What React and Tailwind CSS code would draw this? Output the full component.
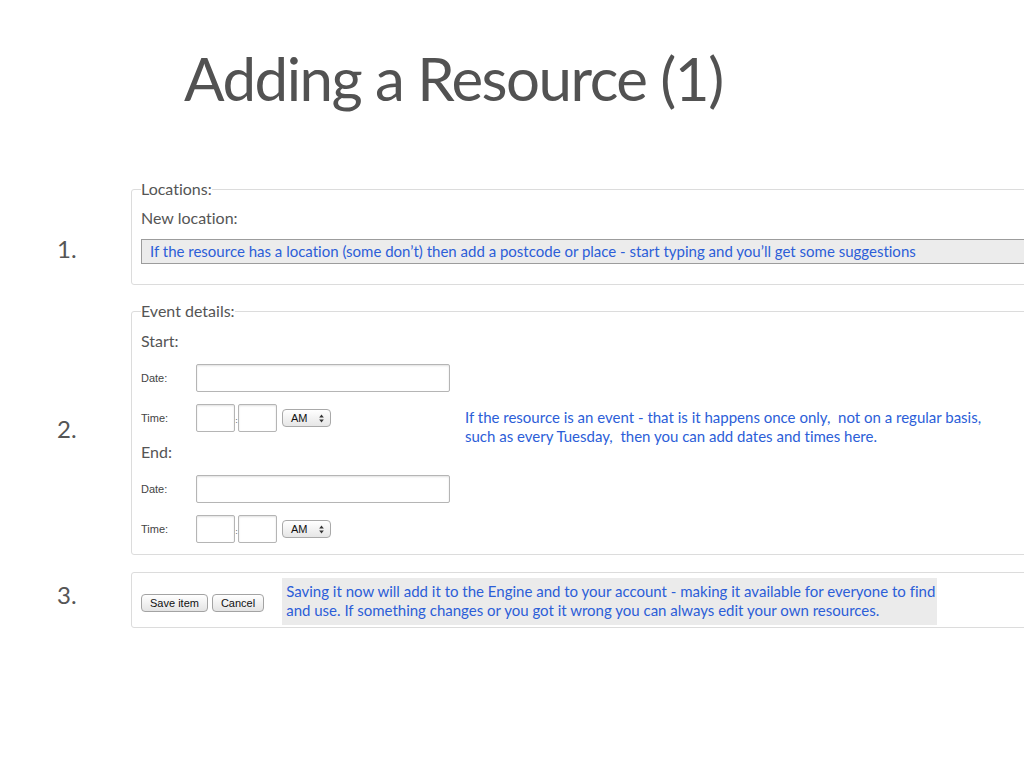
import React from 'react';

const BLUE = 'text-[#2c5ed8]';

const TextBox = ({ className = '' }) => (
  <div className={`h-[28px] border border-[#b5b5b5] rounded-[2px] bg-white shadow-[inset_0_1px_2px_rgba(0,0,0,0.12)] ${className}`}></div>
);

const AmSelect = () => (
  <div className="ml-[5px] w-[49px] h-[18px] rounded-[4px] border border-[#a9a9a9] bg-gradient-to-b from-white to-[#e6e6e6] flex items-center justify-between pl-[8px] pr-[6px] font-['Liberation_Sans',sans-serif] text-[11px] text-[#111]">
    <span>AM</span>
    <svg width="5" height="9" viewBox="0 0 5 9">
      <path d="M2.5 0.5 L4.8 3.5 L0.2 3.5 Z" fill="#333" />
      <path d="M2.5 8.5 L4.8 5.5 L0.2 5.5 Z" fill="#333" />
    </svg>
  </div>
);

const FieldRow = ({ label, children, className = '' }) => (
  <div className={`flex items-center ${className}`}>
    <span className="w-[55px] text-[11px] text-[#444] font-['Liberation_Sans',sans-serif]">{label}</span>
    {children}
  </div>
);

const TimeRow = ({ className }) => (
  <FieldRow label="Time:" className={className}>
    <div className="flex items-center">
      <TextBox className="w-[39px]" />
      <span className="text-[8px] leading-none text-[#555] -mx-[1px] mt-[4px] w-[5px] text-center">:</span>
      <TextBox className="w-[39px]" />
      <AmSelect />
    </div>
  </FieldRow>
);

const Button = ({ children, className = '' }) => (
  <button className={`h-[18px] px-[8px] rounded-[4px] border border-[#a3a3a3] bg-gradient-to-b from-white to-[#e4e4e4] text-[11px] leading-none text-[#111] font-['Liberation_Sans',sans-serif] ${className}`}>
    {children}
  </button>
);

export default function App() {
  return (
    <div className="w-[1024px] h-[768px] overflow-hidden bg-white font-['Lato',sans-serif] text-[#555] [font-variant-ligatures:none]">
      {/* Title */}
      <h1 className="pl-[184px] pt-[48px] text-[60px] leading-none text-[#525252] tracking-[-1.5px]">
        Adding a Resource (1)
      </h1>

      <div className="mt-[72px] flex flex-col gap-[17px]">
        {/* 1. Locations */}
        <div className="flex items-center">
          <div className="w-[131px] shrink-0 pl-[57px] text-[24px] mt-[32px]">1.</div>
          <fieldset className="w-[1000px] shrink-0 border border-[#dcdcdc] rounded-[3px] pl-[9px] pb-[20px]">
            <legend className="text-[16px] leading-[18px]">Locations:</legend>
            <div className="mt-[11px] text-[16px] leading-[18px]">New location:</div>
            <div className={`mt-[12px] h-[25px] border border-[#9c9c9c] bg-[#ececec] pl-[8px] flex items-center text-[15px] ${BLUE}`}>
              If the resource has a location (some don’t) then add a postcode or place - start typing and you’ll get some suggestions
            </div>
          </fieldset>
        </div>

        {/* 2. Event details */}
        <div className="flex items-center">
          <div className="w-[131px] shrink-0 pl-[57px] text-[24px]">2.</div>
          <fieldset className="w-[1000px] shrink-0 border border-[#dcdcdc] rounded-[3px] pl-[9px] pb-[11px]">
            <legend className="text-[16px] leading-[18px]">Event details:</legend>
            <div className="flex">
              <div className="w-[324px]">
                <div className="mt-[12px] text-[16px] leading-[18px]">Start:</div>
                <FieldRow label="Date:" className="mt-[14px]">
                  <TextBox className="w-[254px]" />
                </FieldRow>
                <TimeRow className="mt-[12px]" />
                <div className="mt-[11px] text-[16px] leading-[18px]">End:</div>
                <FieldRow label="Date:" className="mt-[14px]">
                  <TextBox className="w-[254px]" />
                </FieldRow>
                <TimeRow className="mt-[12px]" />
              </div>
              <div className={`mt-[88px] text-[15px] leading-[19px] ${BLUE}`}>
                If the resource is an event - that is it happens once only,&nbsp; not on a regular basis,
                <br />
                such as every Tuesday,&nbsp; then you can add dates and times here.
              </div>
            </div>
          </fieldset>
        </div>

        {/* 3. Save */}
        <div className="flex items-center">
          <div className="w-[131px] shrink-0 pl-[57px] text-[24px] mb-[10px]">3.</div>
          <fieldset className="w-[1000px] shrink-0 border border-[#dcdcdc] rounded-[3px] pl-[9px] pt-[5px] pb-[2px]">
            <div className="flex items-center">
              <Button className="mt-[3px]">Save item</Button>
              <Button className="ml-[4px] mt-[3px]">Cancel</Button>
              <div className={`ml-[18px] w-[655px] h-[47px] bg-[#ebebeb] px-[4px] pt-[4px] text-[15px] leading-[19px] whitespace-nowrap ${BLUE}`}>
                Saving it now will add it to the Engine and to your account - making it available for everyone to find
                <br />
                and use. If something changes or you got it wrong you can always edit your own resources.
              </div>
            </div>
          </fieldset>
        </div>
      </div>
    </div>
  );
}
